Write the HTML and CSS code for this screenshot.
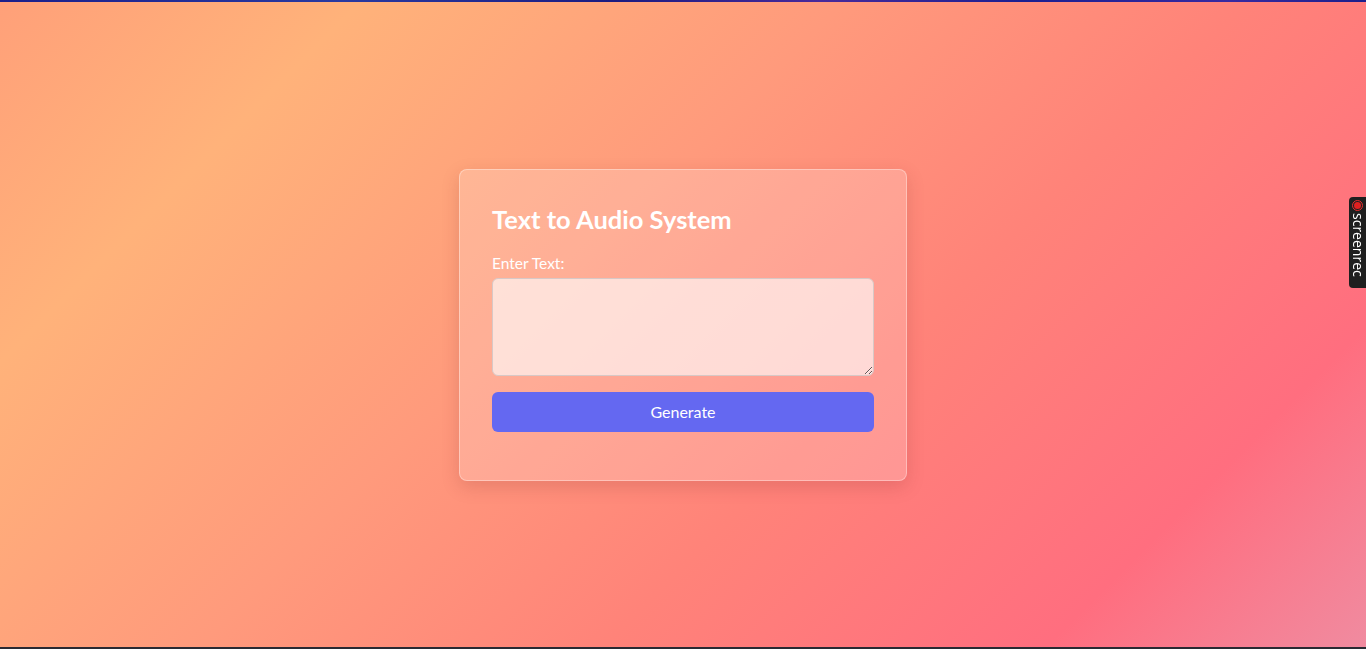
FILE: index.html
```html
<!DOCTYPE html>
<html lang="en">
<head>
<meta charset="UTF-8">
<title>Text to Audio System</title>
<link rel="stylesheet" href="styles.css">
</head>
<body>
<div class="edge edge-top"></div>
<main class="page">
  <section class="card">
    <h1 class="title">Text to Audio System</h1>
    <label class="label" for="text">Enter Text:</label>
    <textarea id="text" class="input"></textarea>
    <button class="btn" type="button">Generate</button>
  </section>
</main>
<div class="recorder">
  <span class="rec-dot"></span>
  <span class="rec-text">screenrec</span>
</div>
<div class="edge edge-bottom"></div>
</body>
</html>
```
FILE: styles.css
```css
* { box-sizing: border-box; }
html, body { height: 100%; }
body {
  margin: 0;
  font-family: "Segoe UI", Lato, "Open Sans", sans-serif;
  background: linear-gradient(135deg, #ffa079 0%, #ffb27a 18%, #ff9a7c 42%, #ff8379 62%, #ff6e7f 84%, #f08ba0 100%);
  overflow: hidden;
}
.page {
  height: 100%;
  display: flex;
  align-items: center;
  justify-content: center;
}
.card {
  width: 448px;
  padding: 32px 32px 48px;
  background: rgba(255, 255, 255, 0.2);
  border: 1px solid rgba(255, 255, 255, 0.35);
  border-radius: 8px;
  box-shadow: 0 6px 18px rgba(120, 40, 40, 0.18);
  display: flex;
  flex-direction: column;
}
.title {
  margin: 0 0 16px;
  color: #fff;
  font-size: 25.5px;
  line-height: 34px;
  font-weight: 700;
}
.label {
  color: #fff;
  font-size: 15.5px;
  line-height: 22px;
  margin-bottom: 4px;
}
.input {
  height: 98px;
  width: 100%;
  background: rgba(255, 255, 255, 0.62);
  border: 1px solid #d8c8c6;
  border-radius: 6px;
  margin: 0 0 16px;
  font: inherit;
  resize: vertical;
}
.btn {
  height: 40px;
  border: none;
  border-radius: 6px;
  background: #6468f1;
  color: #fff;
  font-family: inherit;
  font-size: 16px;
}
.recorder {
  position: fixed;
  right: 0;
  top: 197px;
  width: 17px;
  height: 91px;
  background: #1f1f1f;
  border-radius: 4px 0 0 4px;
  display: flex;
  flex-direction: column;
  align-items: center;
  padding-top: 3px;
}
.rec-dot {
  width: 11px;
  height: 11px;
  border-radius: 50%;
  background: #e02020;
  border: 2px solid #1f1f1f;
  outline: 1px solid #e83030;
  outline-offset: -1px;
}
.rec-text {
  writing-mode: vertical-rl;
  color: #fff;
  font-family: "Open Sans", sans-serif;
  font-size: 14px;
  line-height: 16px;
  margin-top: 2px;
}
.edge {
  position: fixed;
  left: 0;
  right: 0;
  height: 2px;
}
.edge-top { top: 0; background: linear-gradient(90deg, #1c1f8a, #2a3aa0 25%, #1c1c80 45%, #4a2a9a 60%, #1c2090 75%, #3a2aa0 90%, #1c1f8a); }
.edge-bottom { bottom: 0; background: #2a2a33; }
```
